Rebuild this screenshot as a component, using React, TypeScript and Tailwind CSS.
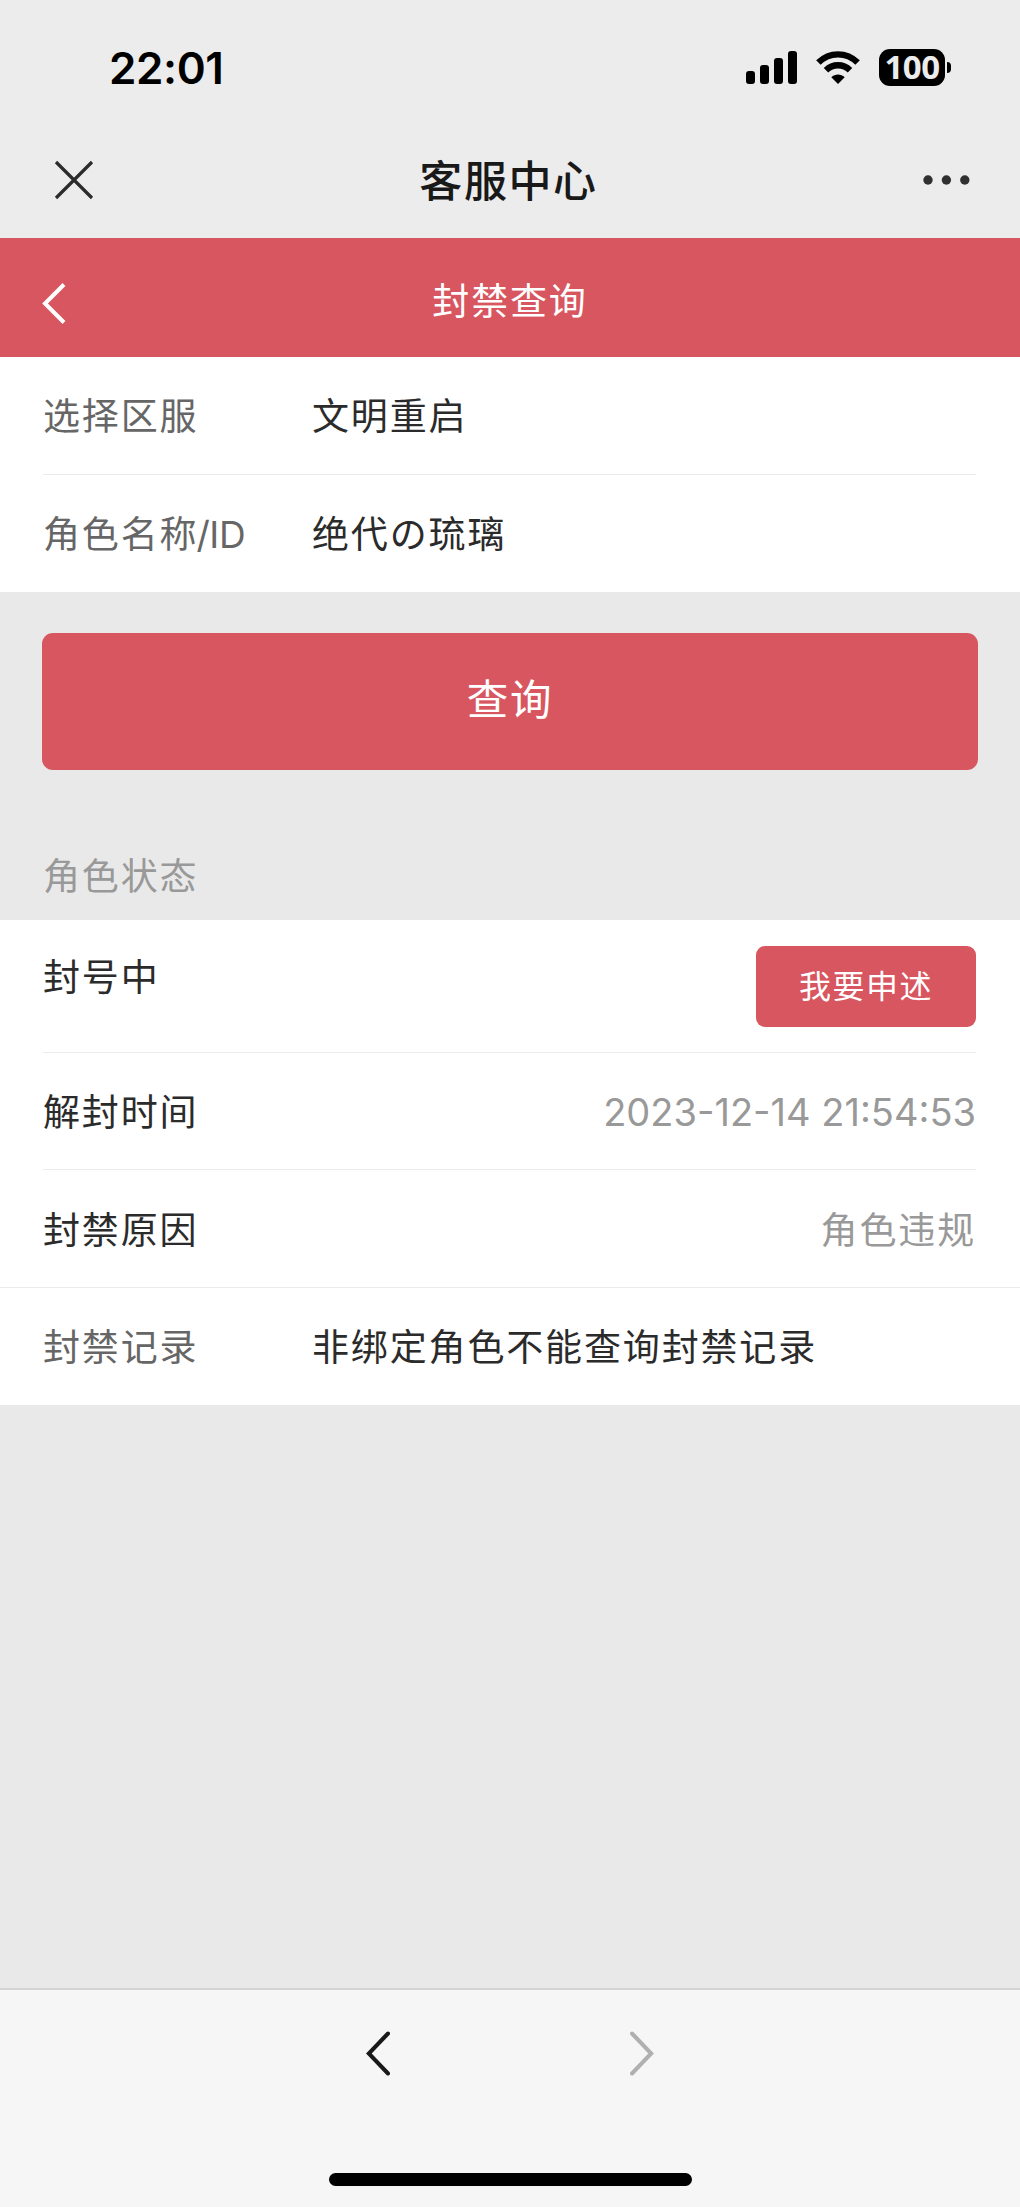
import type { ReactNode } from 'react';

interface FieldRowProps {
  readonly label: ReactNode;
  readonly children: ReactNode;
}

function StatusBar() {
  return (
    <div className="h-[135px] pl-[109px] pr-[69px] flex items-center justify-between text-black">
      <span className="font-[Inter] text-[44px] leading-none font-semibold tracking-[-0.4px]">22:01</span>
      <div className="flex items-center">
        {/* Signal */}
        <svg className="w-[51px] h-[33px] mr-[19px]" viewBox="0 0 51 33" fill="currentColor">
          <rect x="0" y="20" width="9" height="13" rx="3" />
          <rect x="14" y="14" width="9" height="19" rx="3" />
          <rect x="28" y="7" width="9" height="26" rx="3" />
          <rect x="42" y="0" width="9" height="33" rx="3" />
        </svg>
        {/* Wifi */}
        <svg className="w-[44px] h-[33px] mr-[19px]" viewBox="0 0 44 33" fill="none" stroke="currentColor">
          <path d="M2.4 11.6C13.5 .6 30.5 .6 41.6 11.6" strokeWidth="6.4" />
          <path d="M10 19.2C16.8 12.6 27.2 12.6 34 19.2" strokeWidth="6.4" />
          <path d="M22 33L15.3 26.2C19 22.6 25 22.6 28.7 26.2Z" fill="currentColor" stroke="none" />
        </svg>
        {/* Battery */}
        <div className="w-[66px] h-[37px] pb-[2px] rounded-[11px] bg-black text-[#ececec] flex items-center justify-center font-['Noto_Sans'] text-[33px] leading-none font-bold tracking-[-0.5px]">
          100
        </div>
        <div className="ml-[2px] w-[4px] h-[11px] rounded-r-full bg-black" />
      </div>
    </div>
  );
}

function NavBar() {
  return (
    <div className="h-[103px] pl-[54px] pr-[50px] pb-[13px] flex items-center justify-between text-[#191919]">
      <svg className="w-10 h-10" viewBox="0 0 40 40" fill="none" stroke="#2b2b2b" strokeWidth="3.2">
        <path d="M2 2L38 38M38 2L2 38" />
      </svg>
      <h1 className="pt-[2px] text-[43px] leading-none font-medium tracking-[1.6px]">客服中心</h1>
      <svg className="w-[47px] h-[10px]" viewBox="0 0 47 10" fill="#303030">
        <circle cx="5" cy="5" r="4.7" />
        <circle cx="23.4" cy="5" r="4.7" />
        <circle cx="41.8" cy="5" r="4.7" />
      </svg>
    </div>
  );
}

function FieldRow({ label, children }: FieldRowProps) {
  return (
    <div className="h-[117px] pt-[2px] flex items-center">
      <span className="w-[269px] text-[#666]">{label}</span>
      <span>{children}</span>
    </div>
  );
}

export default function App() {
  return (
    <div className="w-[1020px] h-[2207px] flex flex-col bg-[#e9e9e9] font-[Inter,'Noto_Sans_CJK_SC',sans-serif] text-[37px] leading-none tracking-[1.85px] text-[#2b2b2b]">
      <header className="bg-[#ececec]">
        <StatusBar />
        <NavBar />
      </header>

      {/* Page title */}
      <div className="h-[119px] px-[42px] grid grid-cols-[1fr_auto_1fr] items-center bg-[#d8565f] text-white">
        <svg className="mt-3 w-[24px] h-[41px]" viewBox="0 0 24 41" fill="none" stroke="currentColor" strokeWidth="4">
          <path d="M22 1.5L3 20.5L22 39.5" />
        </svg>
        <h2 className="pt-[8px]">封禁查询</h2>
      </div>

      {/* Query form */}
      <section className="h-[235px] pl-[43px] pr-[44px] bg-white">
        <div className="border-b border-[#ebebeb]">
          <FieldRow label="选择区服">文明重启</FieldRow>
        </div>
        <FieldRow
          label={
            <>
              角色名称<span className="ml-[-2px] tracking-[-0.4px]">/ID</span>
            </>
          }
        >
          绝代の琉璃
        </FieldRow>
      </section>

      <button className="mx-[42px] mt-[41px] h-[137px] pb-[2px] rounded-[11px] bg-[#d8565f] text-white text-[41.5px] tracking-[1.8px]">
        查询
      </button>

      {/* Role status */}
      <h3 className="h-[150px] px-[43px] pt-[88px] text-[#999]">角色状态</h3>
      <section className="pl-[43px] pr-[44px] bg-white">
        <div className="h-[133px] pt-[26px] flex justify-between border-b border-[#ebebeb]">
          <span className="pt-[13px]">封号中</span>
          <button className="w-[220px] h-[81px] rounded-[9px] bg-[#d8565f] text-white text-[32px] tracking-[1.5px]">
            我要申述
          </button>
        </div>
        <div className="h-[117px] pt-[2px] flex items-center justify-between border-b border-[#ebebeb]">
          <span>解封时间</span>
          <span className="text-[38px] tracking-normal text-[#999]">2023-12-14 21:54:53</span>
        </div>
        <div className="h-[117px] pt-[3px] flex items-center justify-between">
          <span>封禁原因</span>
          <span className="text-[#999]">角色违规</span>
        </div>
      </section>
      <section className="pl-[43px] pr-[44px] bg-white border-t border-[#ebebeb]">
        <FieldRow label="封禁记录">非绑定角色不能查询封禁记录</FieldRow>
      </section>

      {/* Browser toolbar */}
      <footer className="mt-auto h-[219px] pt-[41px] pb-[21px] flex flex-col items-center justify-between bg-[#f6f6f6] border-t-2 border-[#d4d4d4]">
        <div className="flex gap-[240px]">
          <svg className="w-[24px] h-[46px]" viewBox="0 0 24 46" fill="none" stroke="#191919" strokeWidth="4" strokeLinecap="round">
            <path d="M22 2.5L2.8 22.5L22 42.5" />
          </svg>
          <svg className="w-[24px] h-[46px]" viewBox="0 0 24 46" fill="none" stroke="#b0b0b0" strokeWidth="4" strokeLinecap="round">
            <path d="M2 2.5L21.2 22.5L2 42.5" />
          </svg>
        </div>
        <div className="w-[363px] h-[13px] rounded-full bg-black" />
      </footer>
    </div>
  );
}
